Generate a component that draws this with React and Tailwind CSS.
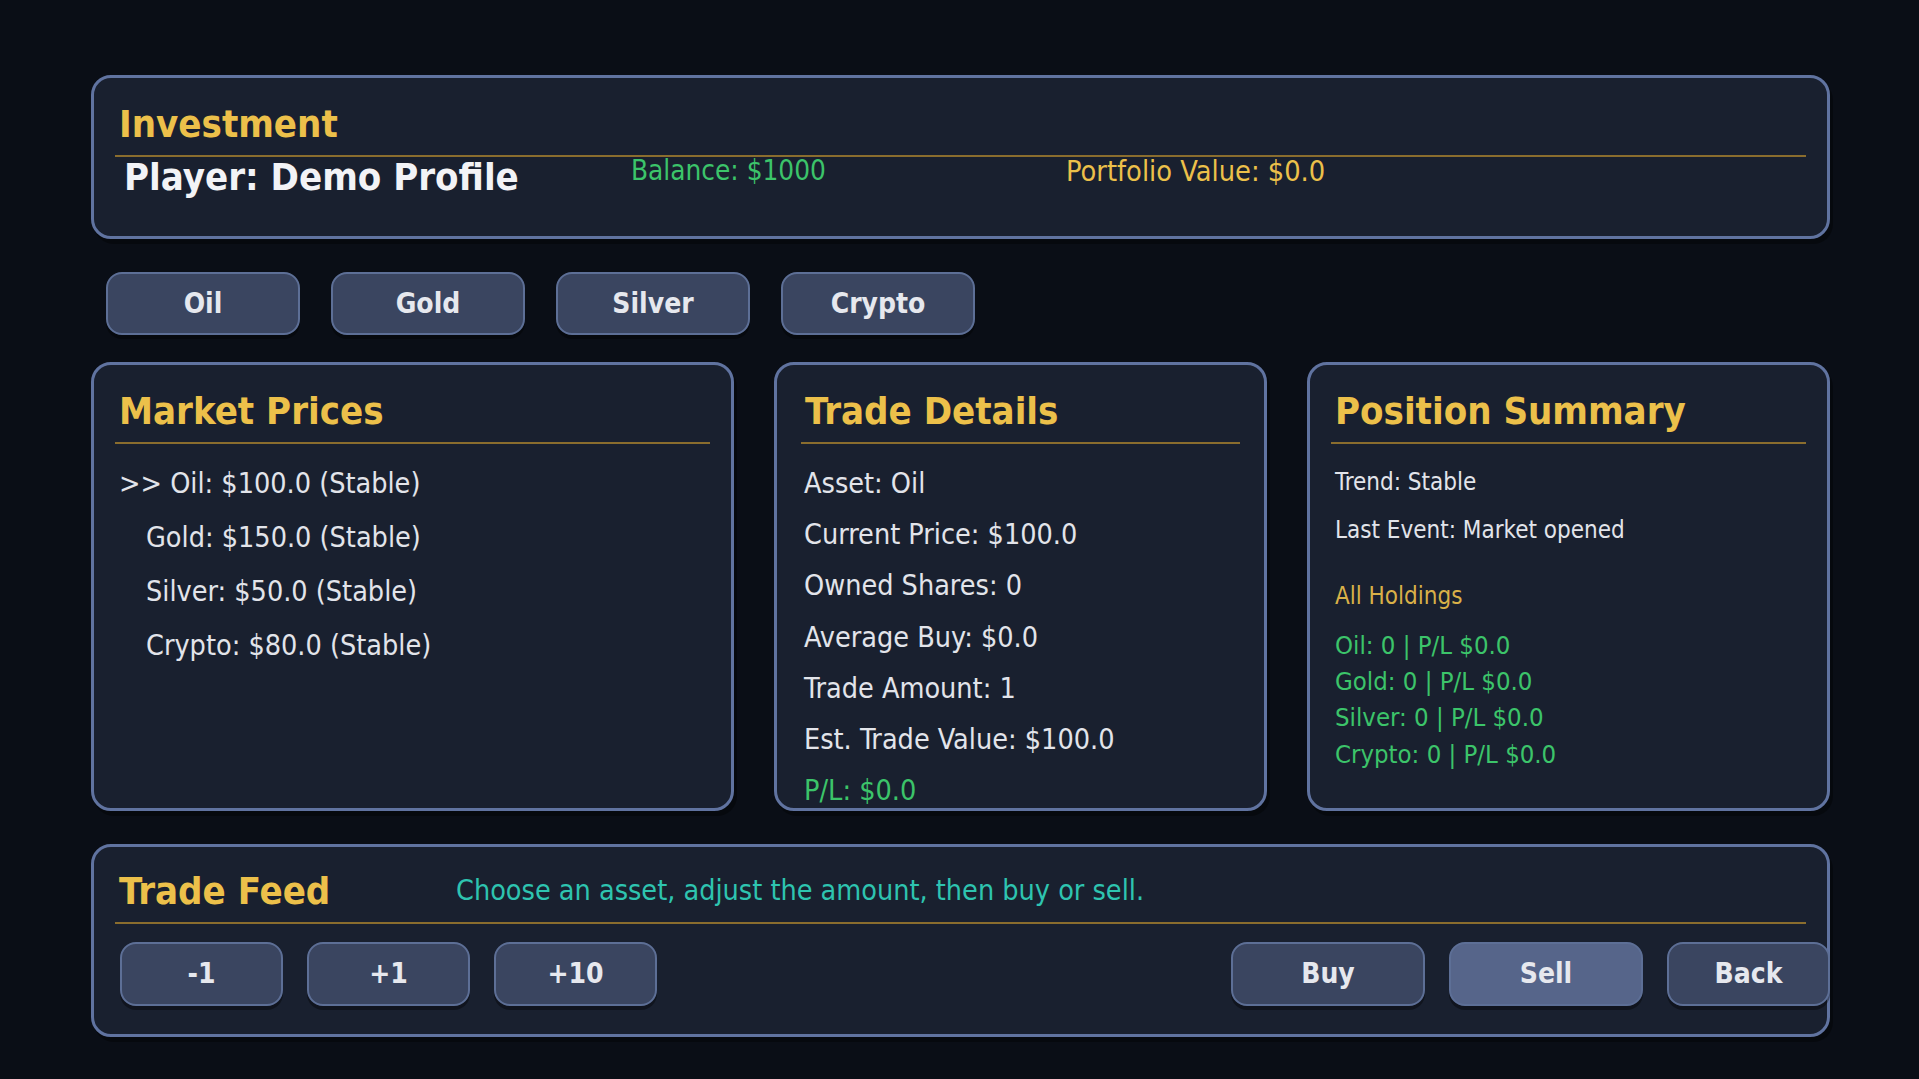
import React from "react";

const assets = ["Oil", "Gold", "Silver", "Crypto"];

const prices = [
  { label: "Oil: $100.0 (Stable)", active: true },
  { label: "Gold: $150.0 (Stable)" },
  { label: "Silver: $50.0 (Stable)" },
  { label: "Crypto: $80.0 (Stable)" },
];

const details = [
  "Asset: Oil",
  "Current Price: $100.0",
  "Owned Shares: 0",
  "Average Buy: $0.0",
  "Trade Amount: 1",
  "Est. Trade Value: $100.0",
];

const holdings = [
  "Oil: 0 | P/L $0.0",
  "Gold: 0 | P/L $0.0",
  "Silver: 0 | P/L $0.0",
  "Crypto: 0 | P/L $0.0",
];

const Panel = ({ className = "", children }) => (
  <div
    className={`bg-[#19202f] border-[3px] border-[#6073a0] rounded-[20px] shadow-[3px_5px_0_rgba(0,0,0,0.35)] ${className}`}
  >
    {children}
  </div>
);

const Heading = ({ children }) => (
  <h2 className="pl-[4px] text-[38px] leading-[44px] font-bold text-[#ecc04a] pb-[9px] border-b-2 border-[#8a6d2e]">
    {children}
  </h2>
);

const Btn = ({ children, w = "w-[163px]", light = false }) => (
  <button
    className={`${w} h-[64px] shrink-0 rounded-[16px] border-2 border-[#5d6f96] ${
      light ? "bg-[#56658a]" : "bg-[#3a4560]"
    } text-[28px] font-bold text-[#e6e8ee] shadow-[0_4px_0_rgba(0,0,0,0.35)]`}
  >
    {children}
  </button>
);

export default function App() {
  return (
    <div className="min-h-screen h-[1079px] bg-[#0a0e16] pt-[75px] pl-[91px] font-['DejaVu_Sans_Condensed','DejaVu_Sans',sans-serif] text-[#e2e4ea]">
      <div className="w-[1739px] flex flex-col">
        {/* header */}
        <Panel className="h-[164px] px-[21px] pt-[24px]">
          <h1 className="pl-[4px] text-[38px] leading-[44px] font-bold text-[#ecc04a] pb-[9px] border-b-2 border-[#8a6d2e]">
            Investment
          </h1>
          <div className="flex items-start">
            <div className="w-[507px] ml-[9px] mt-[1px] text-[38px] leading-[38px] font-bold text-[#f2f3f6]">
              Player: Demo Profile
            </div>
            <div className="w-[435px] mt-[2px] text-[27.7px] leading-[24px] text-[#3cc46a]">
              Balance: $1000
            </div>
            <div className="mt-[2px] text-[28.7px] leading-[24px] text-[#ecc04a]">
              Portfolio Value: $0.0
            </div>
          </div>
        </Panel>

        {/* asset tabs */}
        <div className="flex gap-[31px] ml-[15px] mt-[33px]">
          {assets.map((a) => (
            <button
              key={a}
              className="w-[194px] h-[63px] rounded-[16px] border-2 border-[#5d6f96] bg-[#3a4560] text-[28px] font-bold text-[#e6e8ee] shadow-[0_4px_0_rgba(0,0,0,0.35)]"
            >
              {a}
            </button>
          ))}
        </div>

        {/* panels */}
        <div className="flex gap-[40px] mt-[27px] h-[449px]">
          <Panel className="w-[643px] px-[21px] pt-[24px]">
            <Heading>Market Prices</Heading>
            <div className="mt-[13px] pl-[4px] text-[28.5px] leading-[54px]">
              {prices.map((p) => (
                <div key={p.label} className={p.active ? "" : "pl-[27px]"}>
                  {p.active ? ">> " : ""}
                  {p.label}
                </div>
              ))}
            </div>
          </Panel>

          <Panel className="w-[493px] px-[24px] pt-[24px]">
            <Heading>Trade Details</Heading>
            <div className="mt-[14px] pl-[3px] text-[28.5px] leading-[51.2px]">
              {details.map((d) => (
                <div key={d}>{d}</div>
              ))}
              <div className="text-[#3cc46a]">P/L: $0.0</div>
            </div>
          </Panel>

          <Panel className="w-[523px] px-[21px] pt-[24px]">
            <Heading>Position Summary</Heading>
            <div className="mt-[14px] pl-[4px] text-[24px]">
              <div className="leading-[48px]">Trend: Stable</div>
              <div className="leading-[48px]">Last Event: Market opened</div>
              <div className="mt-[24px] leading-[36px] text-[#d9b148]">
                All Holdings
              </div>
              <div className="mt-[13px] leading-[36.2px] text-[25.5px] text-[#3cc46a]">
                {holdings.map((h) => (
                  <div key={h}>{h}</div>
                ))}
              </div>
            </div>
          </Panel>
        </div>

        {/* trade feed */}
        <Panel className="mt-[33px] h-[193px] pl-[21px] pr-[21px] pt-[22px]">
          <div className="flex items-center pb-[9px] border-b-2 border-[#8a6d2e]">
            <div className="w-[341px] shrink-0 pl-[4px] text-[38px] leading-[44px] font-bold text-[#ecc04a]">
              Trade Feed
            </div>
            <div className="text-[28.5px] text-[#2ec4b0]">
              Choose an asset, adjust the amount, then buy or sell.
            </div>
          </div>
          <div className="flex mt-[18px] pl-[5px] mr-[-24px]">
            <div className="flex gap-[24px]">
              <Btn>-1</Btn>
              <Btn>+1</Btn>
              <Btn>+10</Btn>
            </div>
            <div className="flex gap-[24px] ml-auto">
              <Btn w="w-[194px]">Buy</Btn>
              <Btn w="w-[194px]" light>
                Sell
              </Btn>
              <Btn>Back</Btn>
            </div>
          </div>
        </Panel>
      </div>
    </div>
  );
}
